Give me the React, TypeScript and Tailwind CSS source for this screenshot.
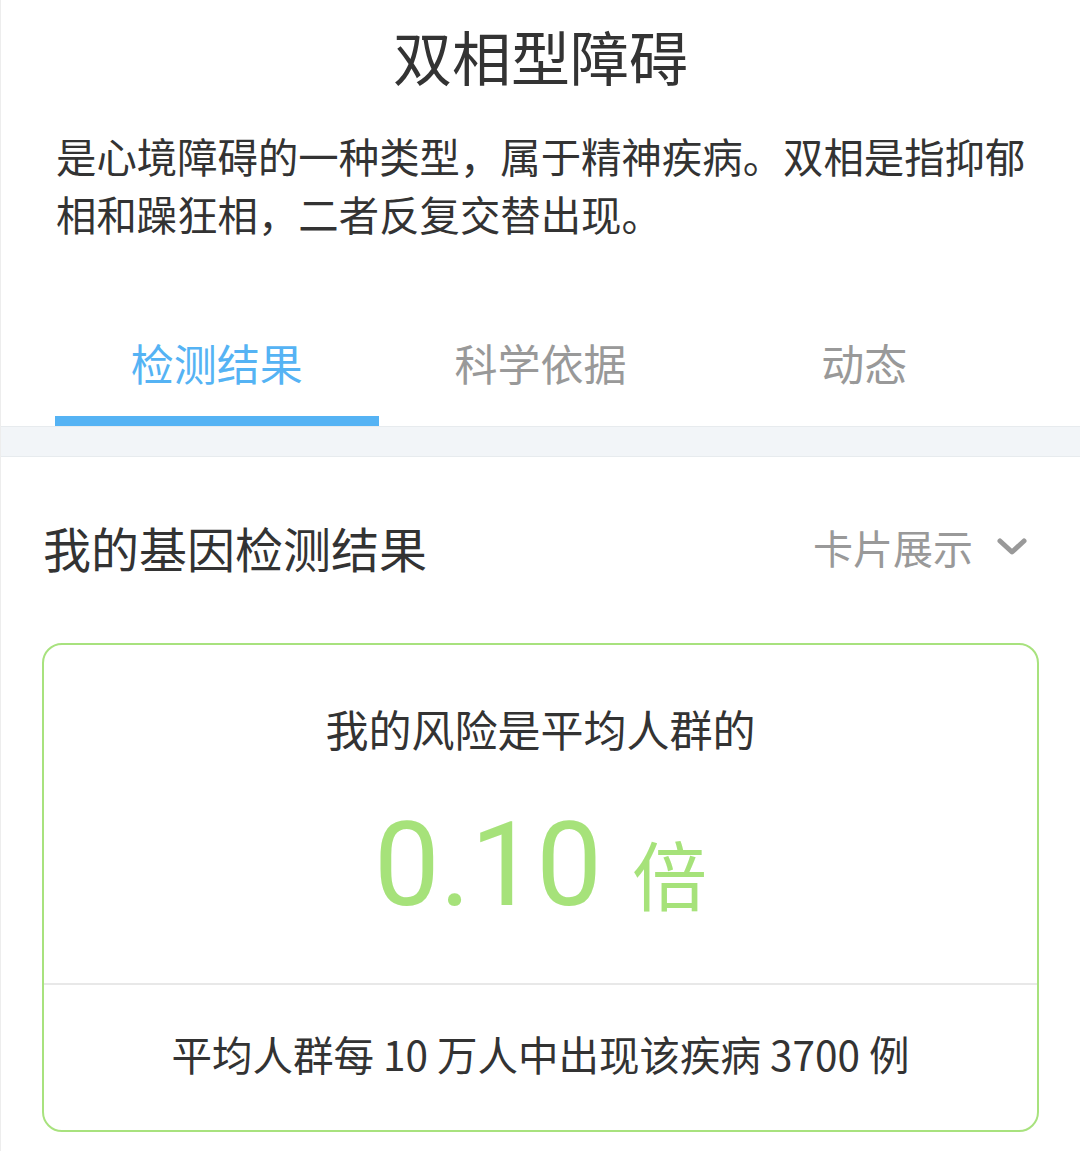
export default function App() {
    const tabs = ["检测结果", "科学依据", "动态"];
    const active = 0;

    return (
        <div className="min-h-[1151px] w-[1080px] bg-white border-l border-[#ededed] text-[#333333] font-['Noto_Sans_CJK_SC','Noto_Sans',sans-serif]">
            {/* header */}
            <h1 className="pt-[22px] text-center text-[59px] leading-[67px] font-normal text-[#333333]">双相型障碍</h1>
            <p className="mt-[38px] pl-[55px] pr-[40px] text-[40.4px] leading-[58px] text-[#333333]">
                是心境障碍的一种类型，属于精神疾病。双相是指抑郁相和躁狂相，二者反复交替出现。
            </p>

            {/* tabs */}
            <div className="mt-[89px] flex px-[54px]">
                {tabs.map((tab, i) => (
                    <div key={tab} className="flex flex-1 flex-col items-center">
                        <span className={`text-[43px] leading-[60px] ${i === active ? "text-[#55b3f4]" : "text-[#999999]"}`}>
                            {tab}
                        </span>
                        <div className={`mt-[24px] h-[10px] w-full ${i === active ? "bg-[#55b3f4]" : "bg-transparent"}`} />
                    </div>
                ))}
            </div>
            <div className="h-[31px] bg-[#f2f5f8] border-y border-[#e7ebee]" />

            {/* result section */}
            <div className="flex items-center justify-between pl-[42px] pr-[53px] pt-[60px]">
                <span className="text-[48px] leading-[60px] text-[#333333]">我的基因检测结果</span>
                <div className="flex items-center gap-[24px]">
                    <span className="text-[40px] leading-[56px] text-[#999999]">卡片展示</span>
                    <svg width="30" height="18" viewBox="0 0 30 18" fill="none">
                        <path d="M3 3 L15 14 L27 3" stroke="#999999" strokeWidth="5" strokeLinecap="round" strokeLinejoin="round" />
                    </svg>
                </div>
            </div>

            <div className="mx-[41px] mt-[66px] rounded-[20px] border-2 border-[#a8e27e]">
                <div className="pt-[53px] text-center text-[43px] leading-[60px] text-[#333333]">我的风险是平均人群的</div>
                <div className="mt-[49px] flex items-baseline justify-center gap-[30px] text-[#a6e27a]">
                    <span className="font-['Roboto',sans-serif] text-[117px] leading-none">0.10</span>
                    <span className="text-[75px] leading-none">倍</span>
                </div>
                <div className="mt-[59px] border-t-2 border-[#e8e8e8]" />
                <div className="pt-[41px] pb-[48px] text-center text-[40.5px] leading-[56px] text-[#333333]">
                    平均人群每 10 万人中出现该疾病 3700 例
                </div>
            </div>
        </div>
    );
}
